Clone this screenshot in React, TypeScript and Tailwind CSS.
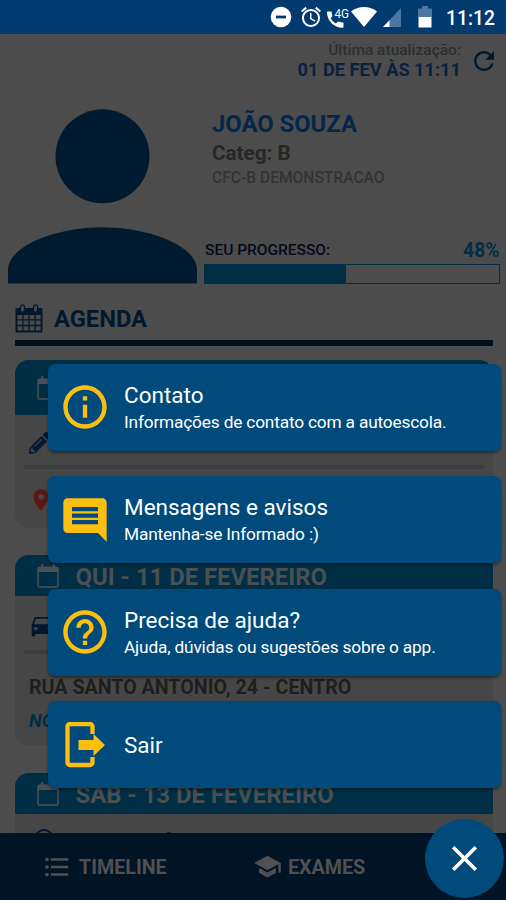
import React from 'react';
import {
  MdRefresh,
  MdInfoOutline,
  MdHelpOutline,
  MdFormatListBulleted,
  MdSchool,
  MdAccessAlarm,
  MdLocationOn,
  MdInsertComment,
  MdDirectionsCar,
  MdClose,
} from 'react-icons/md';
import { FaPencilAlt } from 'react-icons/fa';

function StatusBar() {
  return (
    <div className="flex h-[34px] items-center bg-[#003a6e] pl-[270px] text-white">
      <svg className="h-[22px] w-[22px]" viewBox="0 0 22 22">
        <circle cx="11" cy="11" r="10.3" fill="#fff" />
        <rect x="6" y="9.6" width="10" height="2.8" fill="#003a6e" />
      </svg>
      <MdAccessAlarm className="ml-[7px] h-[24px] w-[24px]" />
      <svg className="ml-[4px] h-[24px] w-[23px]" viewBox="0 0 23 24">
        <path
          d="M.5 6.500h4l.9 4.600-1.800 2.200c1.300 2.200 3 3.900 5.200 5.100l2.200-1.900 5.500 1.200v4c0 .7-.5 1.100-1.100 1.100C7 22.800 0 15.700 0 7.300c0-.5.1-.8.5-.8z"
          fill="#fff"
        />
        <text x="7.500" y="13" fontSize="12" fontWeight="400" fill="#fff" fontFamily="Roboto, sans-serif" textLength="14.500" lengthAdjust="spacingAndGlyphs">
          4G
        </text>
      </svg>
      <svg className="ml-px h-[20px] w-[26px]" viewBox="0 0 26 20">
        <path d="M0 4.500C7-1.500 19-1.500 26 4.500L13 20z" fill="#fff" />
      </svg>
      <svg className="ml-[6px] h-[19px] w-[18px]" viewBox="0 0 18 19">
        <path d="M18 0v19H0z" fill="#4d76a0" />
        <path d="M6.500 12.200V19H0z" fill="#fff" />
      </svg>
      <svg className="ml-[17px] h-[22px] w-[14px]" viewBox="0 0 14 22">
        <path d="M4 0h6v2.500h4V11H0V2.500h4z" fill="#4d76a0" />
        <path d="M.5 11h13v10.500H.5z" fill="#fff" />
      </svg>
      <span className="mt-[3px] ml-[14px] text-[19.300px] leading-[34px] font-medium whitespace-nowrap">11:12</span>
    </div>
  );
}

function Profile() {
  return (
    <section className="flex h-[200px] pt-[19px] pl-2">
      <svg className="h-[175px] w-[189px] shrink-0" viewBox="0 0 189 175">
        <circle cx="94.500" cy="47.300" r="47" fill="#001a30" />
        <path d="M0 174.500V161C0 137 48 118.300 94.500 118.300S189 137 189 161v13.500z" fill="#001a30" />
      </svg>
      <div className="ml-[7px] w-[295.500px]">
        <h1 className="ml-2 text-[23.800px] leading-[30px] font-bold whitespace-nowrap text-[#04264a]">JOÃO SOUZA</h1>
        <p className="ml-2 text-[20.700px] leading-[28px] font-bold whitespace-nowrap text-[#262626]">Categ: B</p>
        <p className="ml-2 text-[15.600px] leading-[22px] font-medium whitespace-nowrap text-[#333]">CFC-B DEMONSTRACAO</p>
        <div className="mt-[51px] flex h-[22px] items-center justify-between">
          <span className="pl-px text-[15.500px] font-medium whitespace-nowrap text-[#07091b]">SEU PROGRESSO:</span>
          <span className="text-[19.300px] font-bold whitespace-nowrap text-[#002e47]">48%</span>
        </div>
        <div className="mt-[2px] h-[20px] border border-[#002e47]">
          <div className="h-full w-[141px] bg-[#002e45]" />
        </div>
      </div>
    </section>
  );
}

function CalendarGrid() {
  return (
    <svg className="h-[29px] w-[28px]" viewBox="0 0 28 29">
      <path d="M2 4h24a1.500 1.500 0 0 1 1.500 1.500v21.500a1.500 1.500 0 0 1-1.500 1.500H2A1.500 1.500 0 0 1 .5 27V5.500A1.500 1.500 0 0 1 2 4z" fill="#02182f" />
      <path
        d="M2.500 11h4.800v4.200H2.500zM8.600 11h4.800v4.200H8.600zM14.700 11h4.800v4.200h-4.800zM20.800 11h4.800v4.200h-4.800zM2.500 16.600h4.800v4.200H2.500zM8.600 16.600h4.800v4.200H8.600zM14.700 16.600h4.800v4.200h-4.800zM20.800 16.600h4.800v4.200h-4.800zM2.500 22.200h4.800v4.200H2.500zM8.600 22.200h4.800v4.200H8.600zM14.700 22.200h4.800v4.200h-4.800zM20.800 22.200h4.800v4.200h-4.800z"
        fill="#4a4a4a"
      />
      <rect x="5.500" y=".8" width="4" height="7.500" rx="2" fill="#4c4c4c" stroke="#02182f" strokeWidth="1.300" />
      <rect x="18.500" y=".8" width="4" height="7.500" rx="2" fill="#4c4c4c" stroke="#02182f" strokeWidth="1.300" />
    </svg>
  );
}

function CalendarOutline() {
  return (
    <svg className="h-[24px] w-[22px] shrink-0" viewBox="0 0 22 24">
      <path d="M1 5.500V21.500a1.400 1.400 0 0 0 1.400 1.400H19.600a1.400 1.400 0 0 0 1.400-1.400V4.700a1.400 1.400 0 0 0-1.400-1.400H2.400A1.400 1.400 0 0 0 1 4.700z" fill="none" stroke="#4a5052" strokeWidth="1.500" />
      <path d="M1 3h20v5H1zM4.200 0h2v4h-2zM15.800 0h2v4h-2z" fill="#4a5052" />
    </svg>
  );
}

function CardHead({ children }: { children?: React.ReactNode }) {
  return (
    <div className="flex h-[41px] items-center bg-[#002e45] pl-[22px]">
      <CalendarOutline />
      <span className="mt-[2px] ml-[16.500px] text-[23.850px] leading-[30px] font-bold whitespace-nowrap text-[#4a5052]">{children}</span>
    </div>
  );
}

function Agenda() {
  return (
    <section className="h-[543px] overflow-hidden px-[15px] pt-[14px]">
      <div className="flex h-[36px] w-[478px] items-start">
        <CalendarGrid />
        <h2 className="ml-[11px] text-[23.700px] leading-[30px] font-bold text-[#02182f]">AGENDA</h2>
      </div>
      <div className="h-[6px] w-[478px] bg-[#000f1c]" />

      <div className="mt-[14px] h-[168px] w-[478px] overflow-hidden rounded-[14px] bg-[#464646]">
        <div className="flex h-[55px] items-center bg-[#002e45] pl-[22px]">
          <CalendarOutline />
        </div>
        <div className="mx-[9px] flex h-[54px] items-center border-b-4 border-[#3b3e41] pt-[5px] pl-[5px]">
          <FaPencilAlt className="h-[22px] w-[22px] text-[#021a35]" />
        </div>
        <div className="flex h-[61px] items-center pl-[13px]">
          <MdLocationOn className="h-[26px] w-[26px] text-[#5c1712]" />
        </div>
      </div>

      <div className="mt-[27px] h-[190px] w-[478px] overflow-hidden rounded-[14px] bg-[#464646]">
        <CardHead>QUI - 11 DE FEVEREIRO</CardHead>
        <div className="mx-[9px] flex h-[58px] items-center border-b-4 border-[#3b3e41] pt-[5px] pl-[4px]">
          <MdDirectionsCar className="h-[29px] w-[29px] text-[#02182f]" />
        </div>
        <p className="mt-[19px] ml-[14px] text-[19.650px] leading-[30px] font-bold whitespace-nowrap text-[#1e1e1e]">
          RUA SANTO ANTONIO, 24 - CENTRO
        </p>
        <p className="mt-[3px] ml-[14px] text-[18.500px] leading-[30px] font-bold whitespace-nowrap text-[#002e47] italic">NO</p>
      </div>

      <div className="mt-[28px] h-[190px] w-[478px] overflow-hidden rounded-[14px] bg-[#464646]">
        <CardHead>SAB - 13 DE FEVEREIRO</CardHead>
        <div className="flex pt-[15px] pl-[19px]">
          <div className="h-[20px] w-[20px] rounded-full border-2 border-[#02182f]" />
          <div className="mt-[3px] ml-[113px] h-[2px] w-[4px] bg-[#1e1e1e]" />
        </div>
      </div>
    </section>
  );
}

function BottomNav() {
  return (
    <nav className="flex h-[67px] items-center bg-[#001425] pl-[42px] text-[#505050]">
      <MdFormatListBulleted className="h-[30px] w-[30px]" />
      <span className="mt-[2px] ml-[7px] w-[88px] text-[19.700px] font-bold whitespace-nowrap">TIMELINE</span>
      <MdSchool className="ml-[86px] h-[29px] w-[29px]" />
      <span className="mt-[2px] ml-[6px] text-[19.700px] font-bold whitespace-nowrap">EXAMES</span>
    </nav>
  );
}

function ExitIcon() {
  return (
    <svg className="h-[46px] w-[44px]" viewBox="0 0 44 46">
      <path d="M29.500 12V4.500a2.500 2.500 0 0 0-2.500-2.500H7a2.500 2.500 0 0 0-2.500 2.500v36A2.500 2.500 0 0 0 7 43h20a2.500 2.500 0 0 0 2.500-2.500V35" fill="none" stroke="#fdbf0f" strokeWidth="4.300" />
      <path d="M15.500 18H30.500V12L42 23 30.500 34V28H15.500z" fill="#fdbf0f" />
    </svg>
  );
}

function MenuCard({ icon, title, sub }: { icon: React.ReactNode; title: string; sub?: string }) {
  return (
    <div className="flex h-[87px] items-center rounded-[7px] bg-[#004a7c] text-white shadow-[0_2px_3px_rgba(0,0,0,0.4)]">
      <div className="flex w-[74px] shrink-0 items-center justify-center text-[#fdbf0f]">{icon}</div>
      <div className="ml-[2px] pt-px">
        <div className="text-[22.500px] leading-[28px] whitespace-nowrap">{title}</div>
        {sub && <div className="text-[17.300px] leading-[26px] tracking-[-0.180px] whitespace-nowrap">{sub}</div>}
      </div>
    </div>
  );
}

export default function App() {
  return (
    <div className="relative h-[900px] w-[506px] overflow-hidden bg-[#4c4c4c] font-['Roboto',sans-serif]">
      <StatusBar />
      <div className="flex h-[56px] items-start justify-end pt-[6px] pr-[7px]">
        <div className="text-right">
          <div className="text-[15.500px] leading-[20px] font-medium whitespace-nowrap text-[#2f2f2f]">Última atualização:</div>
          <div className="text-[18.200px] leading-[20px] font-bold whitespace-nowrap text-[#0a203f]">01 DE FEV ÀS 11:11</div>
        </div>
        <MdRefresh className="mt-[6px] ml-[8px] h-[30px] w-[30px] text-[#02182f]" />
      </div>
      <Profile />
      <Agenda />
      <BottomNav />

      <div className="absolute top-[363.500px] left-[48px] flex w-[453px] flex-col gap-[25.500px]">
        <MenuCard icon={<MdInfoOutline className="h-[52px] w-[52px]" />} title="Contato" sub="Informações de contato com a autoescola." />
        <MenuCard icon={<MdInsertComment className="h-[52px] w-[52px]" />} title="Mensagens e avisos" sub="Mantenha-se Informado :)" />
        <MenuCard icon={<MdHelpOutline className="h-[52px] w-[52px]" />} title="Precisa de ajuda?" sub="Ajuda, dúvidas ou sugestões sobre o app." />
        <MenuCard icon={<ExitIcon />} title="Sair" />
      </div>
      <button className="absolute top-[819px] left-[425px] flex h-[79px] w-[79px] items-center justify-center rounded-full bg-[#004a7c] text-white">
        <MdClose className="h-[43px] w-[43px]" />
      </button>
    </div>
  );
}
